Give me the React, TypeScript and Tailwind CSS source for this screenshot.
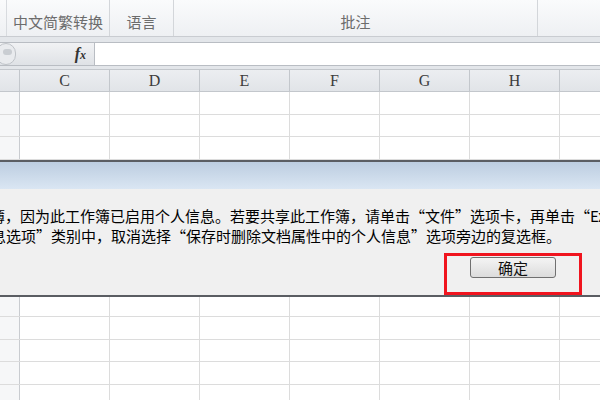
import React from 'react';

const COLUMNS = ['C', 'D', 'E', 'F', 'G', 'H', ''];
const ROW_COUNT = 14;

function RibbonLabels() {
  return (
    <div className="h-[37px] flex bg-gradient-to-b from-[#fafbfc] to-[#eef0f3] border-b border-[#c9ccd1] text-[15px] text-[#6c6c6c]">
      <div className="w-[7px] border-r border-[#d8dbdf]" />
      <div className="w-[103px] border-r border-[#d3d6da] flex items-end justify-center pb-[3px]">中文简繁转换</div>
      <div className="w-[64px] border-r border-[#d3d6da] flex items-end justify-center pb-[3px]">语言</div>
      <div className="w-[364px] border-r border-[#d3d6da] flex items-end justify-center pb-[3px]">批注</div>
      <div className="flex-1" />
    </div>
  );
}

function FormulaBar() {
  return (
    <div className="h-[24px] flex border-y border-[#b9bdc3]">
      <div className="w-[95px] flex items-center bg-gradient-to-b from-[#f1f2f4] to-[#dfe2e6] border-r border-[#b9bdc3]">
        <div className="w-[20px] h-[22px] -ml-[4px] rounded-full border border-[#bfc3c8] bg-[#e9ebee] flex items-center justify-center">
          <div className="w-[9px] h-[6px] rounded-full bg-[#c9cdd2] ml-[3px] -mt-[4px]" />
        </div>
        <span className="ml-auto mr-[8px] font-['Liberation_Serif',serif] italic font-bold text-[16px] text-[#333] leading-none">
          f<span className="text-[12px]">x</span>
        </span>
      </div>
      <div className="flex-1 bg-white" />
    </div>
  );
}

function ColumnHeader() {
  return (
    <div className="h-[23px] flex bg-gradient-to-b from-[#eceef1] to-[#e1e4e8] border-y border-[#c3c7cc] font-['Liberation_Serif',serif] text-[16px] text-[#3c3c3c]">
      <div className="w-[20px] shrink-0 border-r border-[#c3c7cc]" />
      {COLUMNS.map((c, i) => (
        <div key={i} className="w-[90px] shrink-0 border-r border-[#c3c7cc] flex items-center justify-center">
          {c}
        </div>
      ))}
    </div>
  );
}

function Grid() {
  return (
    <div>
      {Array.from({ length: ROW_COUNT }).map((_, r) => (
        <div key={r} className="h-[22.5px] flex border-b border-[#dcdcdc]">
          <div className="w-[20px] shrink-0 border-r border-[#c9ccd0] bg-[#f6f7f8]" />
          {COLUMNS.map((_, i) => (
            <div key={i} className="w-[90px] shrink-0 border-r border-[#dcdcdc]" />
          ))}
        </div>
      ))}
    </div>
  );
}

function PrivacyDialog() {
  return (
    <div className="absolute left-0 right-0 top-[160px] h-[137px] flex flex-col border-y-2 border-[#5a5d62] bg-[#f0f0f0]">
      <div className="h-[30px] bg-gradient-to-b from-[#bccde0] to-[#dae6f3]" />
      <div className="flex-1 text-[15px] leading-[20px] text-black pt-[17px]">
        <p className="whitespace-nowrap -ml-[10px]">
          簿，因为此工作簿已启用个人信息。若要共享此工作簿，请单击“文件”选项卡，再单击“Excel 选项”
        </p>
        <p className="whitespace-nowrap -ml-[9px]">
          息选项”类别中，取消选择“保存时删除文档属性中的个人信息”选项旁边的复选框。
        </p>
        <div className="flex justify-end pr-[18px] pt-[7px]">
          <div className="w-[138px] h-[42px] border-[3px] border-[#f0141e] flex items-start justify-center pt-[1px]">
            <button
              type="button"
              className="w-[86px] h-[21px] rounded-[3px] border border-[#707070] bg-gradient-to-b from-[#f4f4f4] to-[#dcdcdc] text-[15px] leading-none text-[#111] flex items-center justify-center"
            >
              确定
            </button>
          </div>
        </div>
      </div>
    </div>
  );
}

export default function App() {
  return (
    <div className="w-[600px] h-[400px] relative overflow-hidden bg-white font-['Noto_Sans_CJK_SC','Noto_Sans',sans-serif]">
      <RibbonLabels />
      <div className="h-[5px] bg-[#e3e6ea]" />
      <FormulaBar />
      <div className="h-[3px] bg-[#e3e6ea]" />
      <ColumnHeader />
      <Grid />
      <PrivacyDialog />
    </div>
  );
}
